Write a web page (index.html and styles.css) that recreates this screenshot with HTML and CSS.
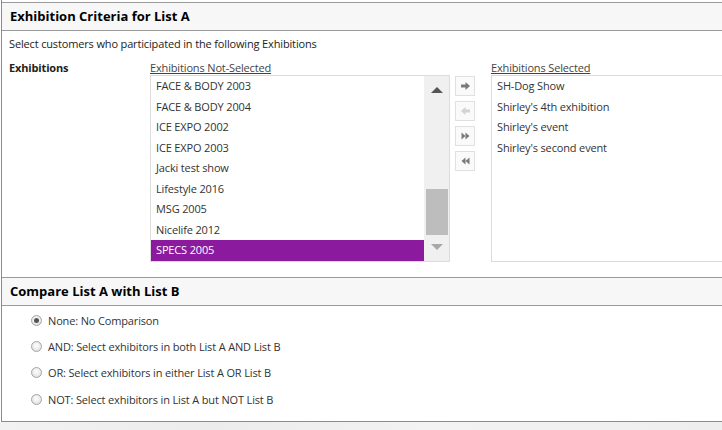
FILE: index.html
```html
<!DOCTYPE html>
<html>
<head>
<meta charset="utf-8">
<link rel="stylesheet" href="styles.css">
</head>
<body>
<div class="frame">
  <div class="section-head">Exhibition Criteria for List A</div>
  <div class="intro">Select customers who participated in the following Exhibitions</div>
  <div class="criteria">
    <div class="field-label">Exhibitions</div>
    <div class="col">
      <div class="col-title">Exhibitions Not-Selected</div>
      <div class="listbox">
        <ul class="items">
          <li>FACE &amp; BODY 2003</li>
          <li>FACE &amp; BODY 2004</li>
          <li>ICE EXPO 2002</li>
          <li>ICE EXPO 2003</li>
          <li>Jacki test show</li>
          <li>Lifestyle 2016</li>
          <li>MSG 2005</li>
          <li>Nicelife 2012</li>
          <li class="sel">SPECS 2005</li>
        </ul>
        <div class="scrollbar">
          <span class="arrow-up"></span>
          <span class="thumb"></span>
          <span class="arrow-down"></span>
        </div>
      </div>
    </div>
    <div class="buttons">
      <div class="btn"><svg width="9" height="8" viewBox="0 0 9 8"><path d="M0 2.5h4.5V0L9 4 4.5 8V5.5H0z" fill="#7a7a7a"/></svg></div>
      <div class="btn"><svg width="9" height="8" viewBox="0 0 9 8"><path d="M9 2.5H4.5V0L0 4l4.5 4V5.5H9z" fill="#d2d2d2"/></svg></div>
      <div class="btn"><svg width="9" height="8" viewBox="0 0 9 8"><path d="M0.5 0.5l4 3.5-4 3.5zM4.5 0.5l4 3.5-4 3.5z" fill="#7a7a7a"/></svg></div>
      <div class="btn"><svg width="9" height="8" viewBox="0 0 9 8"><path d="M8.5 0.5l-4 3.5 4 3.5zM4.5 0.5l-4 3.5 4 3.5z" fill="#7a7a7a"/></svg></div>
    </div>
    <div class="col col-right">
      <div class="col-title">Exhibitions Selected</div>
      <div class="listbox listbox-right">
        <ul class="items">
          <li>SH-Dog Show</li>
          <li>Shirley's 4th exhibition</li>
          <li>Shirley's event</li>
          <li>Shirley's second event</li>
        </ul>
      </div>
    </div>
  </div>
  <div class="section-head section-head-2">Compare List A with List B</div>
  <div class="radios">
    <label class="radio"><span class="dot checked"></span>None: No Comparison</label>
    <label class="radio"><span class="dot"></span>AND: Select exhibitors in both List A AND List B</label>
    <label class="radio"><span class="dot"></span>OR: Select exhibitors in either List A OR List B</label>
    <label class="radio"><span class="dot"></span>NOT: Select exhibitors in List A but NOT List B</label>
  </div>
</div>
<div class="footer"></div>
</body>
</html>
```

FILE: styles.css
```css
html, body {
  margin: 0;
  padding: 0;
  background: #fff;
}
body {
  font-family: "Open Sans", "Noto Sans", sans-serif;
  font-size: 11px;
  letter-spacing: -0.15px;
  color: #222;
  width: 722px;
  height: 430px;
  overflow: hidden;
}
.frame {
  margin-left: 1px;
  border-left: 1px solid #8c8c8c;
  border-bottom: 1px solid #8c8c8c;
  height: 422px;
  box-sizing: border-box;
  padding-top: 2px;
}
.section-head {
  border-top: 1px solid #9a9a9a;
  border-bottom: 1px solid #9a9a9a;
  background: #f7f7f7;
  height: 27px;
  line-height: 27px;
  padding-left: 8px;
  font-weight: 700;
  font-size: 13px;
  letter-spacing: 0;
  color: #000;
}
.section-head-2 {
  margin-top: 15px;
}
.intro {
  margin-top: 5px;
  padding-left: 7px;
  line-height: 16px;
}
.criteria {
  display: grid;
  grid-template-columns: 141px 300px 20px 1fr;
  column-gap: 0;
  margin-top: 8px;
  padding-left: 7px;
}
.field-label {
  font-weight: 700;
  line-height: 15px;
}
.col-title {
  line-height: 15px;
  text-decoration: underline;
  color: #444;
}
.buttons {
  margin-left: 5px;
  margin-top: 16px;
  display: flex;
  flex-direction: column;
  gap: 5px;
}
.col-right {
  margin-left: 21px;
}
.listbox {
  border: 1px solid #dcdcdc;
  height: 187px;
  box-sizing: border-box;
  display: flex;
  background: #fff;
}
.listbox-right {
  border-right: none;
}
.items {
  list-style: none;
  margin: 0;
  padding: 0;
  flex: 1;
}
.items li {
  height: 20.5px;
  line-height: 20.5px;
  padding-left: 5px;
  color: #333;
  white-space: nowrap;
}
.items li.sel {
  background: #8b1a9e;
  color: #fff;
}
.scrollbar {
  width: 25px;
  background: #f0f0f0;
  display: flex;
  flex-direction: column;
  align-items: center;
}
.arrow-up {
  margin-top: 11px;
  width: 0;
  height: 0;
  border-left: 6px solid transparent;
  border-right: 6px solid transparent;
  border-bottom: 6px solid #555;
}
.thumb {
  margin-top: 96px;
  width: 22px;
  height: 46px;
  background: #bdbdbd;
}
.arrow-down {
  margin-top: 9px;
  width: 0;
  height: 0;
  border-left: 6px solid transparent;
  border-right: 6px solid transparent;
  border-top: 6px solid #a8a8a8;
}
.btn {
  width: 20px;
  height: 20px;
  box-sizing: border-box;
  border: 1px solid #e0e0e0;
  background: #fafafa;
  display: flex;
  align-items: center;
  justify-content: center;
}
.radios {
  padding-top: 1px;
  padding-left: 29px;
}
.radio {
  display: flex;
  align-items: center;
  height: 26.4px;
  color: #333;
}
.dot {
  width: 11px;
  height: 11px;
  box-sizing: border-box;
  border-radius: 50%;
  border: 1px solid #a5a5a5;
  background: radial-gradient(circle at 50% 40%, #ffffff 0%, #e8e8e8 60%, #d4d4d4 100%);
  margin-right: 6px;
  display: flex;
  align-items: center;
  justify-content: center;
}
.dot.checked::after {
  content: "";
  width: 5px;
  height: 5px;
  border-radius: 50%;
  background: #555;
}
.footer {
  height: 8px;
  background: linear-gradient(90deg, #f2f2f2 0%, #ececec 30%, #f3f3f3 60%, #eeeeee 100%);
}
```
